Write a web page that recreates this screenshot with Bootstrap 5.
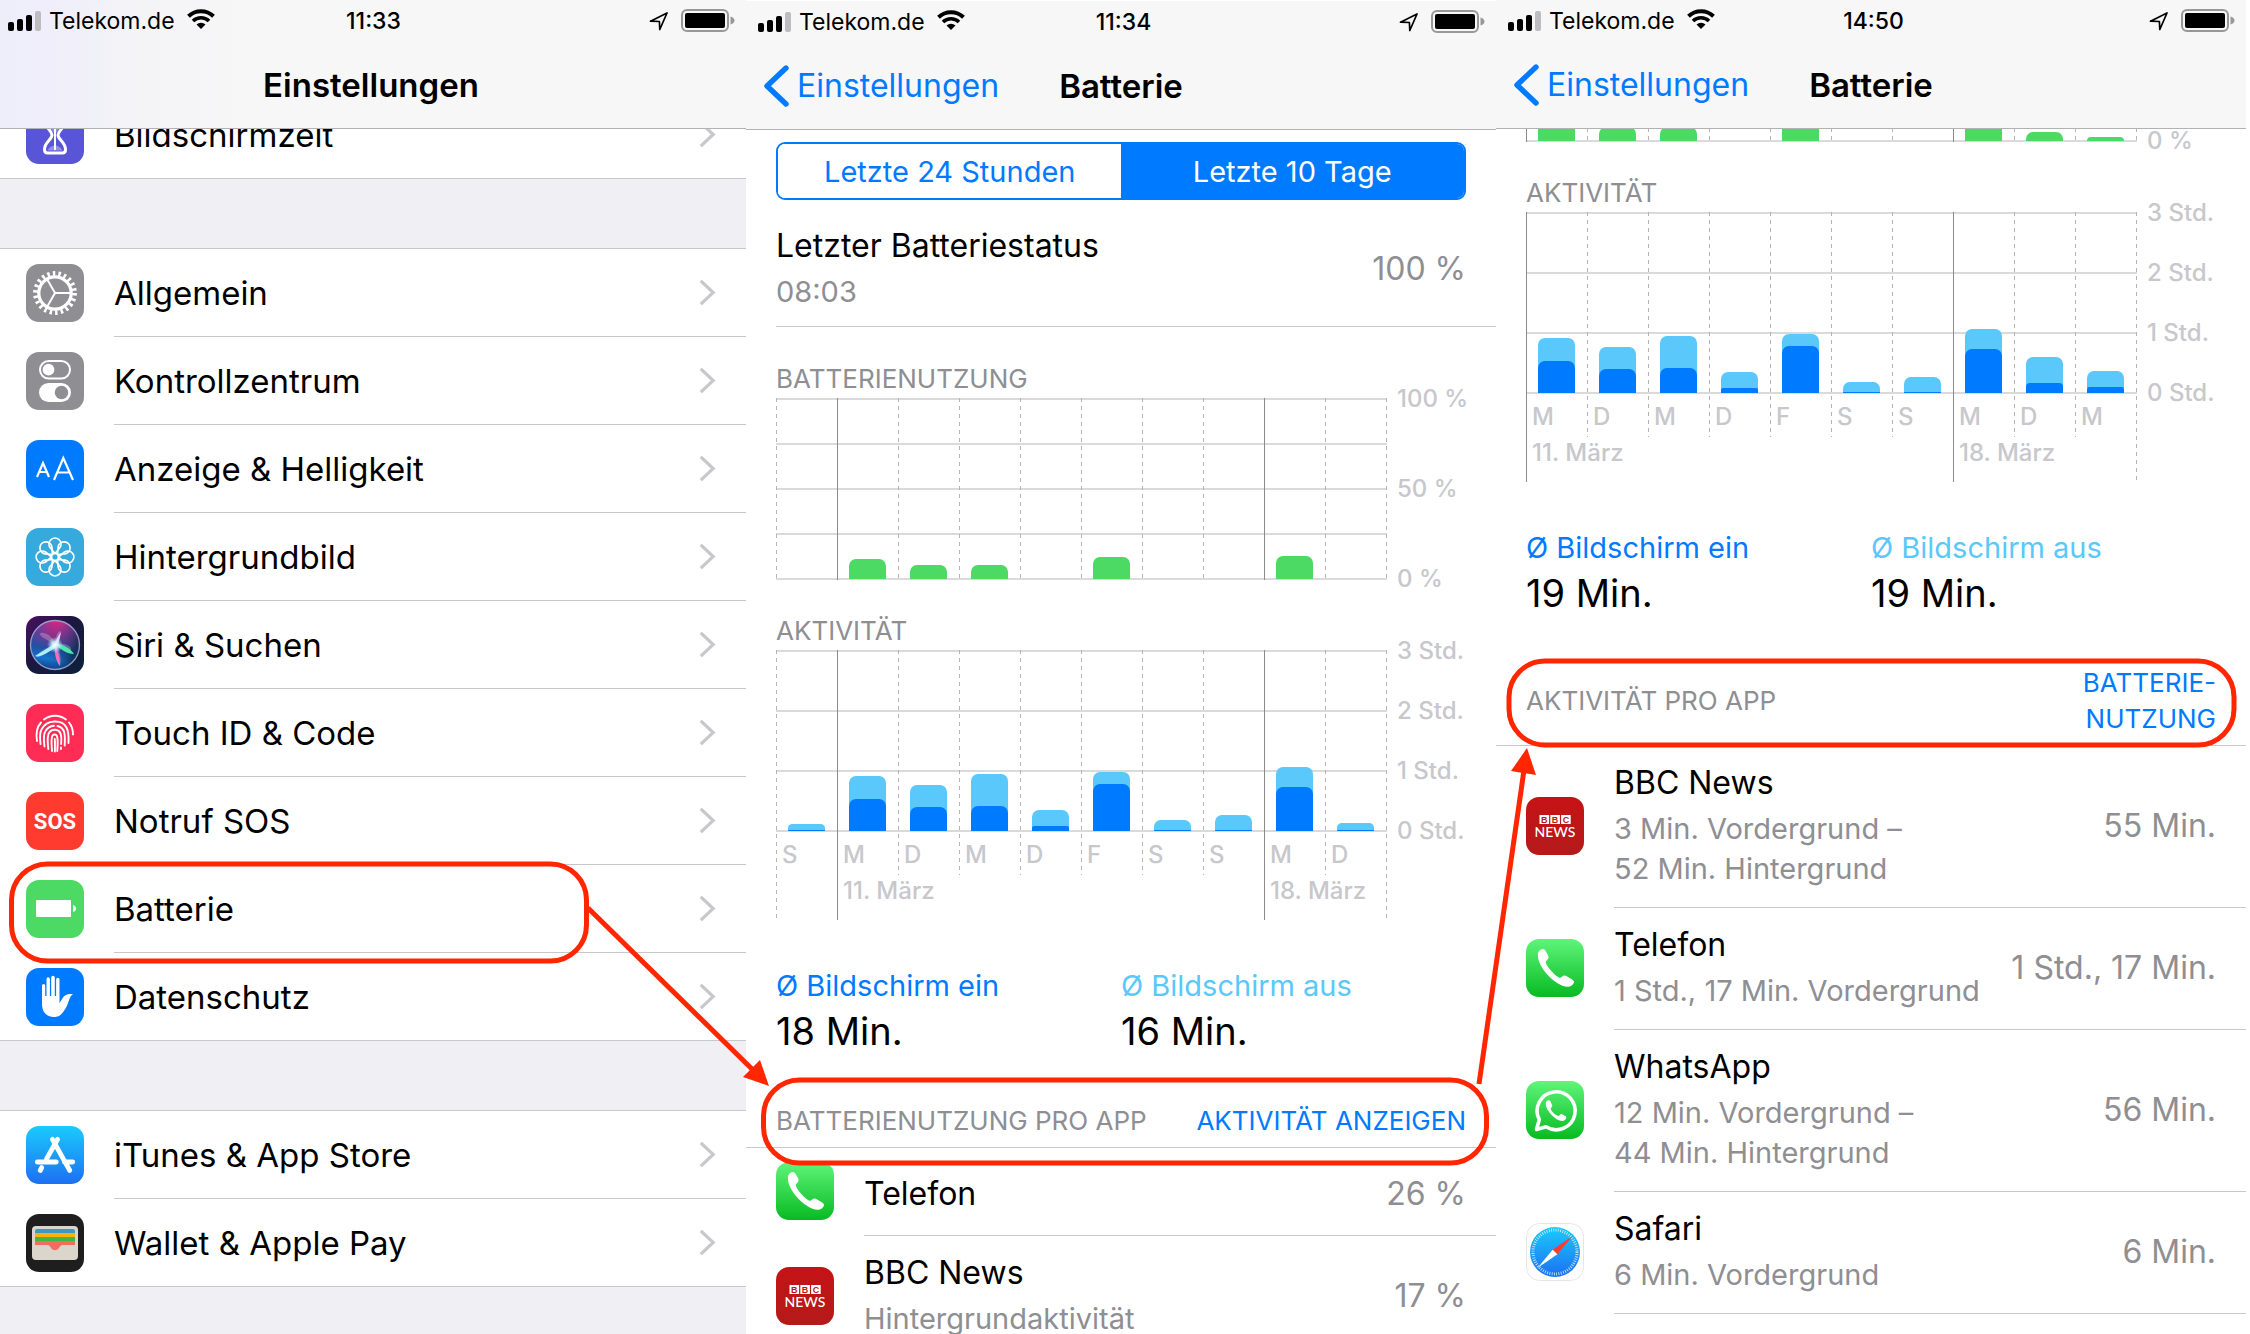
<!DOCTYPE html>
<html lang="de">
<head>
<meta charset="utf-8">
<meta name="viewport" content="width=device-width, initial-scale=1">
<title>Einstellungen – Batterie</title>
<link href="https://cdn.jsdelivr.net/npm/bootstrap@5.3.0/dist/css/bootstrap.min.css" rel="stylesheet">
<style>
:root{--ios-blue:#007aff;--ios-sky:#5ac8fa;--ios-gray:#8e8e93;--ios-pale:#c7c7cc;--ios-line:#c8c7cc;--ios-green:#4cd964}
body{font-family:Inter,"Noto Sans",sans-serif;color:#000;background:#fff}
.screens{display:grid;grid-template-columns:746fr 750fr 750fr 4fr;height:100vh;overflow:hidden}
.phone{min-width:0;overflow:hidden}
.phone-cut>*{margin-left:-4px}
.phone-low{padding-top:1px}
.topbar{background:#f7f7f7;border-bottom:1px solid #b2b2b2;height:129px;flex:none}
.phone-cut .topbar{background:linear-gradient(90deg,#eeedfa 0,#efeefa 60px,#f4f4f7 140px,#f7f7f7 280px)}
.triple{display:grid;grid-template-columns:1fr auto 1fr;align-items:center}
.statusline{height:42px;padding:0 11px 0 12px;font-size:23px;line-height:28px}
.statusline .clock{font-weight:500;padding-left:4px}
.carrier{margin:0 12px 0 7px}
.navline{height:86px;padding:0 17px;font-size:32px;line-height:40px}
.navline h1{font-size:33px;line-height:40px;font-weight:600;margin:0}
.navline a{color:var(--ios-blue);font-size:32px}
.screen-body{overflow:hidden;flex:1 1 0;min-height:0}
.scrolled-menu{margin-top:-38px}
.scrolled-stats{margin-top:-169px}
.menu{border-radius:0}
.menu-row{height:88px;padding:0 0 0 30px;color:#000;text-decoration:none;font-size:33px;line-height:40px}
.menu-row:hover{color:#000}
.menu-text{border-bottom:1px solid var(--ios-line);height:88px;padding-right:30px;margin-left:30px}
.menu>li:last-child .menu-row{border-bottom:1px solid var(--ios-line)}
.menu>li:last-child .menu-text{border-bottom:0}
.menu-gap{background:#efeff4;height:70px;border-bottom:1px solid var(--ios-line)}
.menu-end{background:#efeff4;height:100px}
.appicon{width:58px;height:58px;flex:none;display:block}
.inset{padding:0 30px}
.stats-top{padding-top:1px}
.seg{height:58px;margin-top:12px;border:2px solid var(--ios-blue);border-radius:9px;overflow:hidden}
.seg .btn{border:0;border-radius:0;padding:2px 0 0;font-size:29px;line-height:40px;color:var(--ios-blue);background:#fff}
.seg .btn.active{background:var(--ios-blue);color:#fff}
.t-title{font-size:32px;line-height:40px;margin-bottom:6px}
.t-sub{font-size:29px;line-height:40px;color:var(--ios-gray)}
.t-value{font-size:32px;line-height:40px;color:var(--ios-gray);white-space:nowrap}
.last-level{margin-left:30px;padding:26px 30px 14px 0;border-bottom:1px solid var(--ios-line)}
.t-caps{font-size:26px;line-height:32px;color:var(--ios-gray);margin:35px 0 3px;font-weight:400}
.plot{flex:1 1 0;min-width:0;height:182px;background:linear-gradient(#dadada 2px,transparent 2px) 0 0/100% 60px}
.plot-pct{background-size:100% 45px}
.plot-days{height:270px;background-repeat:no-repeat;background-image:linear-gradient(#dadada 2px,transparent 2px),linear-gradient(#dadada 2px,transparent 2px),linear-gradient(#dadada 2px,transparent 2px),linear-gradient(#dadada 2px,transparent 2px);background-position:0 0,0 60px,0 120px,0 180px;background-size:100% 2px}
.daycol{flex:1 1 0;min-width:0;height:182px;background:repeating-linear-gradient(#b4b4b4 0 4px,transparent 4px 8px) 0 0/1px 100% no-repeat}
.plot-days .daycol{height:225px}
.plot-days .daycol.tall,.plot-days .weekstart{height:270px}
.weekstart{background:linear-gradient(#8c8c8c,#8c8c8c) 0 0/1px 100% no-repeat}
.plot-end{width:1px;background:repeating-linear-gradient(#b4b4b4 0 4px,transparent 4px 8px)}
.bararea{height:181px}
.usagebar{width:60%;border-radius:7px 7px 0 0;overflow:hidden;background:var(--ios-green);height:calc(var(--pct) * 1.8px)}
.timebar{width:60%;border-radius:min(7px,calc(var(--total) * .6px)) min(7px,calc(var(--total) * .6px)) 0 0;overflow:hidden;background:var(--ios-sky);height:calc(var(--total) * 1px)}
.timebar>div{background:var(--ios-blue);border-radius:min(7px,calc(var(--on) * .4px)) min(7px,calc(var(--on) * .4px)) 0 0;height:calc(var(--on) * 1px)}
.t-day{font-size:24px;line-height:30px;font-weight:500;color:var(--ios-pale);padding-left:6px;white-space:nowrap;display:block}
.daycol .t-day:first-of-type{margin-top:9px}
.daycol .t-day+.t-day{margin-top:6px}
.axis{width:79px;padding-left:10px;margin:-14px 0;height:210px;font-size:24px;line-height:30px;font-weight:500;color:var(--ios-pale);white-space:nowrap}
.averages{padding-top:46px;font-size:29px;line-height:40px}
.averages strong{display:block;font-weight:400;font-size:38px;line-height:46px;margin-top:2px;color:#000}
.c-on{color:var(--ios-blue)}
.c-off{color:var(--ios-sky)}
.apphead{padding:49px 30px 8px;border-bottom:1px solid var(--ios-line)}
.apphead h2{font-size:26px;line-height:36px;margin:0;color:var(--ios-gray);font-weight:400}
.apphead .btn{font-size:26px;line-height:36px;padding:0;border:0;color:var(--ios-blue);text-align:right}
.approw{padding-left:30px}
.approw .appicon{margin-bottom:2px}
.approw-body{min-height:88px;padding:17px 30px 18px 0;margin-left:30px;border-bottom:1px solid var(--ios-line)}
.approw-solo .approw-body{padding-top:20px;padding-bottom:16px}
.approw-body .t-title:last-child{margin-bottom:0}
.marks{position:absolute;left:0;top:0;width:100%;height:1334px;pointer-events:none}
</style>
<script src="https://cdn.jsdelivr.net/npm/bootstrap@5.3.0/dist/js/bootstrap.bundle.min.js"></script>
</head>
<body class="position-relative overflow-hidden">

<svg width="0" height="0" class="position-absolute" aria-hidden="true">
<defs>
<linearGradient id="gPhone" x1="0" y1="0" x2="0" y2="1"><stop offset="0" stop-color="#5ff57a"/><stop offset="1" stop-color="#08ba22"/></linearGradient>
<linearGradient id="gStore" x1="0" y1="0" x2="0" y2="1"><stop offset="0" stop-color="#1acbfd"/><stop offset="1" stop-color="#1d6ff2"/></linearGradient>
<linearGradient id="gBbc" x1="0" y1="0" x2="0" y2="1"><stop offset="0" stop-color="#c51315"/><stop offset="1" stop-color="#b41a1a"/></linearGradient>
<linearGradient id="gSiriBg" x1="0" y1="0" x2="1" y2="1"><stop offset="0" stop-color="#4a0f63"/><stop offset=".45" stop-color="#1c1740"/><stop offset="1" stop-color="#0c2138"/></linearGradient>
<linearGradient id="gSiri" x1=".6" y1="0" x2=".4" y2="1"><stop offset="0" stop-color="#e0257c"/><stop offset=".35" stop-color="#8a2f86"/><stop offset=".6" stop-color="#1d4f9c"/><stop offset=".8" stop-color="#1478cc"/><stop offset="1" stop-color="#123a86"/></linearGradient>
<radialGradient id="gGlow"><stop offset="0" stop-color="#fff"/><stop offset=".4" stop-color="#d8f6ff" stop-opacity=".85"/><stop offset="1" stop-color="#9be8ff" stop-opacity="0"/></radialGradient>
<linearGradient id="gTeal" x1="0" y1="0" x2="1" y2=".3"><stop offset="0" stop-color="#1d4f9c" stop-opacity=".7"/><stop offset=".5" stop-color="#2a5dd0" stop-opacity="0"/><stop offset="1" stop-color="#0b2b4d" stop-opacity=".8"/></linearGradient>

<symbol id="i-signal" viewBox="0 0 34 20"><rect x="0" y="11" width="6" height="9" rx="2"/><rect x="9" y="8" width="6" height="12" rx="2"/><rect x="18" y="4" width="6" height="16" rx="2"/><rect x="27" y="0" width="6" height="20" rx="2" fill="#bdbdc0"/></symbol>
<symbol id="i-wifi" viewBox="0 0 28 20"><path d="M1.500 7.200a18 18 0 0 1 25 0" fill="none" stroke="#000" stroke-width="4"/><path d="M6 12a11.500 11.500 0 0 1 16 0" fill="none" stroke="#000" stroke-width="3.600"/><path d="M9.500 15.400a6.600 6.600 0 0 1 9 0L14 20z"/></symbol>
<symbol id="i-loc" viewBox="0 0 20 20"><path d="M1.500 10.200 18 2l-7.200 16.500-.4-8z" fill="none" stroke="#000" stroke-width="1.700" stroke-linejoin="round"/></symbol>
<symbol id="i-batt" viewBox="0 0 54 24"><rect x="1" y="1" width="46" height="21" rx="5" fill="none" stroke="#98989b" stroke-width="2"/><rect x="4" y="4" width="40" height="15" rx="2"/><path d="M49.500 7.500c3 1 4 2.500 4 4s-1 3-4 4z" fill="#98989b"/></symbol>
<symbol id="i-back" viewBox="0 0 26 42"><path d="M23 3 4 21l19 18" fill="none" stroke="#007aff" stroke-width="5.400" stroke-linecap="round" stroke-linejoin="round"/></symbol>
<symbol id="i-chev" viewBox="0 0 17 27"><path d="M1.800 1.800 14.200 13.500 1.800 25.200" fill="none" stroke="#c7c7cc" stroke-width="3.200"/></symbol>

<symbol id="a-time" viewBox="0 0 58 58"><rect width="58" height="58" rx="13" fill="#5856d6"/><path d="M18.500 10.500h21v3c0 8-7.500 11-7.500 15.500s7.500 7.500 7.500 14.500c0 2.500-1 3.500-3 3.500h-15c-2 0-3-1-3-3.500 0-7 7.500-10 7.500-14.500s-7.500-7.500-7.500-15.500z" fill="none" stroke="#fff" stroke-width="3" stroke-linejoin="round"/><path d="M22 18h14l-6 9v12.500c3 1 5 2 6.500 5h-15c1.500-3 3.500-4 6.500-5V27z" fill="#fff" opacity=".35"/><path d="M28 22h2v22h-2z" fill="#fff"/></symbol>
<symbol id="a-gear" viewBox="0 0 58 58"><rect width="58" height="58" rx="13" fill="#8e8e93"/><g fill="none" stroke="#fff"><circle cx="29" cy="29" r="16.200" stroke-width="3.200"/><circle cx="29" cy="29" r="19.600" stroke-width="4.600" stroke-dasharray="2.500 3.098"/><path d="M29 29h16M29 29l-8-14M29 29l-8 14" stroke-width="2"/></g></symbol>
<symbol id="a-ctrl" viewBox="0 0 58 58"><rect width="58" height="58" rx="13" fill="#8e8e93"/><rect x="14" y="9" width="30" height="17.500" rx="8.700" fill="none" stroke="#fff" stroke-width="2"/><circle cx="22.500" cy="17.700" r="5.900" fill="#fff"/><rect x="13" y="31" width="32" height="19" rx="9.500" fill="#fff"/><circle cx="35.500" cy="40.500" r="6.700" fill="#8e8e93"/></symbol>
<symbol id="a-disp" viewBox="0 0 58 58"><rect width="58" height="58" rx="13" fill="#007aff"/><g fill="none" stroke="#fff" stroke-width="2.200"><path d="M11 37 17 23l6 14M13 32h8"/><path d="M28 40 37.300 18 47 40M31.500 32.500h12"/></g></symbol>
<symbol id="a-wall" viewBox="0 0 58 58"><rect width="58" height="58" rx="13" fill="#36aadc"/><g transform="translate(29 29)" fill="none" stroke="#fff" stroke-width="1.700" stroke-linejoin="round"><path d="M0-3.500-5-9.500a6 6 0 1 1 10 0z"/><path d="M0-3.500-5-9.500a6 6 0 1 1 10 0z" transform="rotate(45)"/><path d="M0-3.500-5-9.500a6 6 0 1 1 10 0z" transform="rotate(90)"/><path d="M0-3.500-5-9.500a6 6 0 1 1 10 0z" transform="rotate(135)"/><path d="M0-3.500-5-9.500a6 6 0 1 1 10 0z" transform="rotate(180)"/><path d="M0-3.500-5-9.500a6 6 0 1 1 10 0z" transform="rotate(225)"/><path d="M0-3.500-5-9.500a6 6 0 1 1 10 0z" transform="rotate(270)"/><path d="M0-3.500-5-9.500a6 6 0 1 1 10 0z" transform="rotate(315)"/><circle r="3.500"/></g></symbol>
<symbol id="a-siri" viewBox="0 0 58 58"><rect width="58" height="58" rx="13" fill="url(#gSiriBg)"/><circle cx="29" cy="29" r="24.500" fill="url(#gSiri)"/><circle cx="29" cy="29" r="24.500" fill="url(#gTeal)"/><path d="M29 29C22 24 14 21 14 18s12-1 15 10c0-7 3-13 5-13s0 9-3 13c6-1 14 1 14 5s-8 1-14-3c3 5 5 14 3 20-3-3-5-12-5-18-6 4-14 9-19 9 2-5 11-10 19-12z" fill="#f4c9ee" opacity=".3"/><path d="M30 27 9 40c5 2 14-4 21-9z" fill="#a5f1ff"/><path d="M29 29c3 5 5 14 5 21-4-4-6-14-5-21z" fill="#ff69c4"/><path d="M30 27c8 2 15 6 18 11-7 0-14-5-18-9z" fill="#4de8a8"/><path d="M28 29c2-5 4-9 7-13-1 5-2 9-3 13z" fill="#e9d6ff"/><circle cx="29" cy="29" r="8" fill="url(#gGlow)"/><circle cx="29" cy="29" r="24.500" fill="none" stroke="#aab6e0" stroke-width="1.300" opacity=".8"/></symbol>
<symbol id="a-touch" viewBox="0 0 58 58"><rect width="58" height="58" rx="13" fill="#ff2d55"/><g fill="none" stroke="#fff" stroke-width="1.900" stroke-linecap="round"><path d="M18 15.500a18 18 0 0 1 22 0"/><path d="M11 37c-1-6-1-13 4-18.500"/><path d="M43 18.500c3 3.500 4 7.500 4 12"/><path d="M14.500 40c-.6-5-1-11 1-14.500C21 15 36 15.500 40.500 23.500c2.500 5 2.300 10 2 15.500"/><path d="M18.500 42.500c-.8-6-1.300-12 1-15.500 2-3.500 5.500-5 8.500-5.300"/><path d="M31.500 22c8 2 7.700 9 7.200 19.500"/><path d="M22.300 45c-.7-7-1.600-13 .9-16.500 3-4 9.500-3.500 11.300.8 1.500 4 .8 8 .6 10.700M35 43.500v1.500"/><path d="M26 47c-.3-6-1.300-13 .6-15.600 1.400-1.400 3.600-1.200 4.300.6 1.500 4 .6 9 .4 15"/><path d="M28.800 35c.3 4 .2 8 .1 12.500"/></g></symbol>
<symbol id="a-sos" viewBox="0 0 58 58"><rect width="58" height="58" rx="13" fill="#ff3b30"/><text x="29" y="37" text-anchor="middle" font-family="Roboto,sans-serif" font-weight="700" font-size="22" fill="#fff">SOS</text></symbol>
<symbol id="a-batt" viewBox="0 0 58 58"><rect width="58" height="58" rx="13" fill="#4cd964"/><rect x="10" y="20" width="35" height="17" rx="1" fill="#fff"/><path d="M47 25c2 .5 3 2 3 3.500S49 31.500 47 32z" fill="#fff"/></symbol>
<symbol id="a-hand" viewBox="0 0 58 58"><rect width="58" height="58" rx="13" fill="#007aff"/><path d="M16 36V17.500a1.600 1.600 0 0 1 3.200 0V28h1.300V11a1.700 1.700 0 0 1 3.400 0v17h1.300V9.500a1.800 1.800 0 0 1 3.600 0V28h1.300V11.500a1.700 1.700 0 0 1 3.400 0V35l3.500-5.500c2-3 5.500-4.200 10-3.300-2 1-3 3-4 6-1.600 5-3.500 9-6 12-3 4-6 4.800-9 4.800-7.500 0-12-5-12-13z" fill="#fff"/></symbol>
<symbol id="a-store" viewBox="0 0 58 58"><rect width="58" height="58" rx="13" fill="url(#gStore)"/><g stroke="#fff" stroke-width="4.800" stroke-linecap="round" fill="none"><path d="M31.600 13.300 20.500 33"/><path d="M26.400 13.300 43.800 44.500"/><path d="M15.800 41.500l-1.600 3"/><path d="M11.300 36h19M38.500 36h8.200"/></g></symbol>
<symbol id="a-wallet" viewBox="0 0 58 58"><rect width="58" height="58" rx="13" fill="#1e1e1f"/><rect x="6" y="12" width="46" height="34" rx="4" fill="#dad6cb"/><path d="M9 19v-2a2 2 0 0 1 2-2h36a2 2 0 0 1 2 2v2z" fill="#3b99c9"/><path d="M9 19h40v4H9z" fill="#ffb003"/><path d="M9 23h40v4H9z" fill="#40b740"/><path d="M9 27h40v4H37c-2 0-3 1-4 3-2 3-6 3-8 0-1-2-2-3-4-3H9z" fill="#f26d5f"/></symbol>
<symbol id="a-phone" viewBox="0 0 58 58"><rect width="58" height="58" rx="13" fill="url(#gPhone)"/><path d="M12 14c1-2.500 3-4 5-4 1.500 0 2.500 1.500 3.500 3.500 1.200 2.300 2.500 4 2 5.500-.5 1.800-3 2.500-2.700 4.500C20.500 27.500 29 36.500 33 38.500c2.200 1 3-1.700 5-2 1.700-.3 4 1.500 6.500 3 2 1.200 3.500 2 3.500 3.500 0 2-3 5-6.500 4.800C29 47.200 10 27 12 14z" fill="#fff"/></symbol>
<symbol id="a-bbc" viewBox="0 0 58 58"><rect width="58" height="58" rx="13" fill="url(#gBbc)"/><path d="M13.500 18h9.600v9h-9.600zM24.300 18h9.600v9h-9.600zM35.100 18h9.600v9h-9.600z" fill="#fff"/><g text-anchor="middle" font-family="'Liberation Sans',sans-serif" font-weight="700" font-size="9" fill="#c01616"><text x="18.300" y="25.800">B</text><text x="29.100" y="25.800">B</text><text x="39.900" y="25.800">C</text></g><text x="29" y="40" text-anchor="middle" font-family="Lato,sans-serif" font-weight="500" font-size="14" fill="#fff">NEWS</text></symbol>
<symbol id="a-wa" viewBox="0 0 58 58"><rect width="58" height="58" rx="13" fill="url(#gPhone)"/><path d="M10.500 48.500l2.800-10A19 19 0 1 1 20 45.800z" fill="none" stroke="#fff" stroke-width="3.600" stroke-linejoin="round"/><path d="M20 21c1-1.800 3.700-2.200 4.300-1l2 4.500c.4 1-1.800 2.500-1.600 3.500.8 2.700 5 6.300 7.600 7 1 .2 2.200-2.400 3.300-2l4.300 2.200c1 .6.200 3.300-1.700 4.300C33 42.500 18 30 20 21z" fill="#fff"/></symbol>
<symbol id="a-safari" viewBox="0 0 58 58"><rect x=".5" y=".5" width="57" height="57" rx="13" fill="#fefefe" stroke="#e6e6e6"/><circle cx="29" cy="29" r="25" fill="url(#gStore)"/><circle cx="29" cy="29" r="22" fill="none" stroke="#d4ecfb" stroke-width="3" stroke-dasharray=".8 1.504"/><path d="M46.500 13 26.600 26.800l4.800 4.500z" fill="#ff3b30"/><path d="M11.500 45 26.600 26.800l4.800 4.500z" fill="#fff"/></symbol>
</defs>
</svg>

<main class="screens">

<section class="phone phone-cut d-flex flex-column" aria-label="Einstellungen">
  <header class="topbar">
    <div class="statusline triple">
      <div class="d-flex align-items-center"><svg width="34" height="20"><use href="#i-signal"/></svg><span class="carrier">Telekom.de</span><svg class="mb-1" width="28" height="20"><use href="#i-wifi"/></svg></div>
      <div class="clock">11:33</div>
      <div class="d-flex align-items-center justify-content-end"><svg class="me-2" width="20" height="20"><use href="#i-loc"/></svg><svg class="ms-1" width="54" height="24"><use href="#i-batt"/></svg></div>
    </div>
    <div class="navline triple"><span></span><h1>Einstellungen</h1><span></span></div>
  </header>
  <div class="screen-body">
    <ul class="menu list-unstyled mb-0 scrolled-menu">
      <li><a href="#" class="menu-row d-flex align-items-center"><svg class="appicon"><use href="#a-time"/></svg><span class="menu-text flex-grow-1 d-flex align-items-center justify-content-between">Bildschirmzeit<svg width="17" height="27"><use href="#i-chev"/></svg></span></a></li>
    </ul>
    <div class="menu-gap"></div>
    <ul class="menu list-unstyled m-0">
      <li><a href="#" class="menu-row d-flex align-items-center"><svg class="appicon"><use href="#a-gear"/></svg><span class="menu-text flex-grow-1 d-flex align-items-center justify-content-between">Allgemein<svg width="17" height="27"><use href="#i-chev"/></svg></span></a></li>
      <li><a href="#" class="menu-row d-flex align-items-center"><svg class="appicon"><use href="#a-ctrl"/></svg><span class="menu-text flex-grow-1 d-flex align-items-center justify-content-between">Kontrollzentrum<svg width="17" height="27"><use href="#i-chev"/></svg></span></a></li>
      <li><a href="#" class="menu-row d-flex align-items-center"><svg class="appicon"><use href="#a-disp"/></svg><span class="menu-text flex-grow-1 d-flex align-items-center justify-content-between">Anzeige &amp; Helligkeit<svg width="17" height="27"><use href="#i-chev"/></svg></span></a></li>
      <li><a href="#" class="menu-row d-flex align-items-center"><svg class="appicon"><use href="#a-wall"/></svg><span class="menu-text flex-grow-1 d-flex align-items-center justify-content-between">Hintergrundbild<svg width="17" height="27"><use href="#i-chev"/></svg></span></a></li>
      <li><a href="#" class="menu-row d-flex align-items-center"><svg class="appicon"><use href="#a-siri"/></svg><span class="menu-text flex-grow-1 d-flex align-items-center justify-content-between">Siri &amp; Suchen<svg width="17" height="27"><use href="#i-chev"/></svg></span></a></li>
      <li><a href="#" class="menu-row d-flex align-items-center"><svg class="appicon"><use href="#a-touch"/></svg><span class="menu-text flex-grow-1 d-flex align-items-center justify-content-between">Touch ID &amp; Code<svg width="17" height="27"><use href="#i-chev"/></svg></span></a></li>
      <li><a href="#" class="menu-row d-flex align-items-center"><svg class="appicon"><use href="#a-sos"/></svg><span class="menu-text flex-grow-1 d-flex align-items-center justify-content-between">Notruf SOS<svg width="17" height="27"><use href="#i-chev"/></svg></span></a></li>
      <li><a href="#" class="menu-row d-flex align-items-center"><svg class="appicon"><use href="#a-batt"/></svg><span class="menu-text flex-grow-1 d-flex align-items-center justify-content-between">Batterie<svg width="17" height="27"><use href="#i-chev"/></svg></span></a></li>
      <li><a href="#" class="menu-row d-flex align-items-center"><svg class="appicon"><use href="#a-hand"/></svg><span class="menu-text flex-grow-1 d-flex align-items-center justify-content-between">Datenschutz<svg width="17" height="27"><use href="#i-chev"/></svg></span></a></li>
    </ul>
    <div class="menu-gap"></div>
    <ul class="menu list-unstyled m-0">
      <li><a href="#" class="menu-row d-flex align-items-center"><svg class="appicon"><use href="#a-store"/></svg><span class="menu-text flex-grow-1 d-flex align-items-center justify-content-between">iTunes &amp; App Store<svg width="17" height="27"><use href="#i-chev"/></svg></span></a></li>
      <li><a href="#" class="menu-row d-flex align-items-center"><svg class="appicon"><use href="#a-wallet"/></svg><span class="menu-text flex-grow-1 d-flex align-items-center justify-content-between">Wallet &amp; Apple Pay<svg width="17" height="27"><use href="#i-chev"/></svg></span></a></li>
    </ul>
    <div class="menu-end"></div>
  </div>
</section>

<section class="phone phone-low d-flex flex-column" aria-label="Batterienutzung">
  <header class="topbar">
    <div class="statusline triple">
      <div class="d-flex align-items-center"><svg width="34" height="20"><use href="#i-signal"/></svg><span class="carrier">Telekom.de</span><svg class="mb-1" width="28" height="20"><use href="#i-wifi"/></svg></div>
      <div class="clock">11:34</div>
      <div class="d-flex align-items-center justify-content-end"><svg class="me-2" width="20" height="20"><use href="#i-loc"/></svg><svg class="ms-1" width="54" height="24"><use href="#i-batt"/></svg></div>
    </div>
    <div class="navline triple"><a href="#" class="d-flex align-items-center text-decoration-none"><svg class="me-2" width="26" height="42"><use href="#i-back"/></svg>Einstellungen</a><h1>Batterie</h1><span></span></div>
  </header>
  <div class="screen-body">
    <div class="inset">
      <div class="seg btn-group d-flex" role="group" aria-label="Zeitraum"><button type="button" class="btn w-50">Letzte 24 Stunden</button><button type="button" class="btn w-50 active" aria-pressed="true">Letzte 10 Tage</button></div>
    </div>
    <div class="last-level d-flex justify-content-between align-items-center"><div><div class="t-title">Letzter Batteriestatus</div><div class="t-sub">08:03</div></div><div class="t-value">100 %</div></div>
    <div class="inset stats-top">
      <h2 class="t-caps">BATTERIENUTZUNG</h2>
      <div class="d-flex">
        <div class="plot plot-pct d-flex">
          <div class="daycol"></div>
          <div class="daycol weekstart"><div class="bararea d-flex align-items-end justify-content-center"><div class="usagebar" style="--pct:11"></div></div></div>
          <div class="daycol"><div class="bararea d-flex align-items-end justify-content-center"><div class="usagebar" style="--pct:8"></div></div></div>
          <div class="daycol"><div class="bararea d-flex align-items-end justify-content-center"><div class="usagebar" style="--pct:8"></div></div></div>
          <div class="daycol"></div>
          <div class="daycol"><div class="bararea d-flex align-items-end justify-content-center"><div class="usagebar" style="--pct:12"></div></div></div>
          <div class="daycol"></div>
          <div class="daycol"></div>
          <div class="daycol weekstart"><div class="bararea d-flex align-items-end justify-content-center"><div class="usagebar" style="--pct:13"></div></div></div>
          <div class="daycol"></div>
          <div class="plot-end"></div>
        </div>
        <div class="axis d-flex flex-column justify-content-between"><span>100 %</span><span>50 %</span><span>0 %</span></div>
      </div>
      <h2 class="t-caps">AKTIVITÄT</h2>
      <div class="d-flex align-items-start">
        <div class="plot plot-days d-flex align-items-start">
          <div class="daycol tall"><div class="bararea d-flex align-items-end justify-content-center"><div class="timebar d-flex flex-column justify-content-end" style="--total:7;--on:1"><div></div></div></div><span class="t-day">S</span></div>
          <div class="daycol weekstart"><div class="bararea d-flex align-items-end justify-content-center"><div class="timebar d-flex flex-column justify-content-end" style="--total:55;--on:32"><div></div></div></div><span class="t-day">M</span><span class="t-day">11. März</span></div>
          <div class="daycol"><div class="bararea d-flex align-items-end justify-content-center"><div class="timebar d-flex flex-column justify-content-end" style="--total:46;--on:24"><div></div></div></div><span class="t-day">D</span></div>
          <div class="daycol"><div class="bararea d-flex align-items-end justify-content-center"><div class="timebar d-flex flex-column justify-content-end" style="--total:57;--on:25"><div></div></div></div><span class="t-day">M</span></div>
          <div class="daycol"><div class="bararea d-flex align-items-end justify-content-center"><div class="timebar d-flex flex-column justify-content-end" style="--total:21;--on:5"><div></div></div></div><span class="t-day">D</span></div>
          <div class="daycol"><div class="bararea d-flex align-items-end justify-content-center"><div class="timebar d-flex flex-column justify-content-end" style="--total:59;--on:47"><div></div></div></div><span class="t-day">F</span></div>
          <div class="daycol"><div class="bararea d-flex align-items-end justify-content-center"><div class="timebar d-flex flex-column justify-content-end" style="--total:11;--on:1"><div></div></div></div><span class="t-day">S</span></div>
          <div class="daycol"><div class="bararea d-flex align-items-end justify-content-center"><div class="timebar d-flex flex-column justify-content-end" style="--total:16;--on:1"><div></div></div></div><span class="t-day">S</span></div>
          <div class="daycol weekstart"><div class="bararea d-flex align-items-end justify-content-center"><div class="timebar d-flex flex-column justify-content-end" style="--total:64;--on:44"><div></div></div></div><span class="t-day">M</span><span class="t-day">18. März</span></div>
          <div class="daycol"><div class="bararea d-flex align-items-end justify-content-center"><div class="timebar d-flex flex-column justify-content-end" style="--total:8;--on:1"><div></div></div></div><span class="t-day">D</span></div>
          <div class="plot-end h-100"></div>
        </div>
        <div class="axis d-flex flex-column justify-content-between"><span>3 Std.</span><span>2 Std.</span><span>1 Std.</span><span>0 Std.</span></div>
      </div>
      <div class="averages row g-0">
        <div class="col-6 c-on">Ø Bildschirm ein<strong>18 Min.</strong></div>
        <div class="col-6 c-off">Ø Bildschirm aus<strong>16 Min.</strong></div>
      </div>
    </div>
    <div class="apphead d-flex justify-content-between align-items-center"><h2>BATTERIENUTZUNG PRO APP</h2><button type="button" class="btn">AKTIVITÄT ANZEIGEN</button></div>
    <div class="approw approw-solo d-flex align-items-center"><svg class="appicon"><use href="#a-phone"/></svg><div class="approw-body flex-grow-1 d-flex align-items-center justify-content-between"><div><div class="t-title">Telefon</div></div><div class="t-value">26 %</div></div></div>
    <div class="approw d-flex align-items-center"><svg class="appicon"><use href="#a-bbc"/></svg><div class="approw-body flex-grow-1 d-flex align-items-center justify-content-between"><div><div class="t-title">BBC News</div><div class="t-sub">Hintergrundaktivität</div></div><div class="t-value">17 %</div></div></div>
  </div>
</section>

<section class="phone d-flex flex-column" aria-label="Aktivität pro App">
  <header class="topbar">
    <div class="statusline triple">
      <div class="d-flex align-items-center"><svg width="34" height="20"><use href="#i-signal"/></svg><span class="carrier">Telekom.de</span><svg class="mb-1" width="28" height="20"><use href="#i-wifi"/></svg></div>
      <div class="clock">14:50</div>
      <div class="d-flex align-items-center justify-content-end"><svg class="me-2" width="20" height="20"><use href="#i-loc"/></svg><svg class="ms-1" width="54" height="24"><use href="#i-batt"/></svg></div>
    </div>
    <div class="navline triple"><a href="#" class="d-flex align-items-center text-decoration-none"><svg class="me-2" width="26" height="42"><use href="#i-back"/></svg>Einstellungen</a><h1>Batterie</h1><span></span></div>
  </header>
  <div class="screen-body">
    <div class="inset scrolled-stats">
      <div class="d-flex">
        <div class="plot plot-pct d-flex">
          <div class="daycol weekstart"><div class="bararea d-flex align-items-end justify-content-center"><div class="usagebar" style="--pct:11"></div></div></div>
          <div class="daycol"><div class="bararea d-flex align-items-end justify-content-center"><div class="usagebar" style="--pct:8"></div></div></div>
          <div class="daycol"><div class="bararea d-flex align-items-end justify-content-center"><div class="usagebar" style="--pct:8"></div></div></div>
          <div class="daycol"></div>
          <div class="daycol"><div class="bararea d-flex align-items-end justify-content-center"><div class="usagebar" style="--pct:12"></div></div></div>
          <div class="daycol"></div>
          <div class="daycol"></div>
          <div class="daycol weekstart"><div class="bararea d-flex align-items-end justify-content-center"><div class="usagebar" style="--pct:13"></div></div></div>
          <div class="daycol"><div class="bararea d-flex align-items-end justify-content-center"><div class="usagebar" style="--pct:5"></div></div></div>
          <div class="daycol"><div class="bararea d-flex align-items-end justify-content-center"><div class="usagebar" style="--pct:2"></div></div></div>
          <div class="plot-end"></div>
        </div>
        <div class="axis d-flex flex-column justify-content-end"><span>0 %</span></div>
      </div>
      <h2 class="t-caps">AKTIVITÄT</h2>
      <div class="d-flex align-items-start">
        <div class="plot plot-days d-flex align-items-start">
          <div class="daycol weekstart"><div class="bararea d-flex align-items-end justify-content-center"><div class="timebar d-flex flex-column justify-content-end" style="--total:55;--on:32"><div></div></div></div><span class="t-day">M</span><span class="t-day">11. März</span></div>
          <div class="daycol"><div class="bararea d-flex align-items-end justify-content-center"><div class="timebar d-flex flex-column justify-content-end" style="--total:46;--on:24"><div></div></div></div><span class="t-day">D</span></div>
          <div class="daycol"><div class="bararea d-flex align-items-end justify-content-center"><div class="timebar d-flex flex-column justify-content-end" style="--total:57;--on:25"><div></div></div></div><span class="t-day">M</span></div>
          <div class="daycol"><div class="bararea d-flex align-items-end justify-content-center"><div class="timebar d-flex flex-column justify-content-end" style="--total:21;--on:5"><div></div></div></div><span class="t-day">D</span></div>
          <div class="daycol"><div class="bararea d-flex align-items-end justify-content-center"><div class="timebar d-flex flex-column justify-content-end" style="--total:59;--on:47"><div></div></div></div><span class="t-day">F</span></div>
          <div class="daycol"><div class="bararea d-flex align-items-end justify-content-center"><div class="timebar d-flex flex-column justify-content-end" style="--total:11;--on:1"><div></div></div></div><span class="t-day">S</span></div>
          <div class="daycol"><div class="bararea d-flex align-items-end justify-content-center"><div class="timebar d-flex flex-column justify-content-end" style="--total:16;--on:1"><div></div></div></div><span class="t-day">S</span></div>
          <div class="daycol weekstart"><div class="bararea d-flex align-items-end justify-content-center"><div class="timebar d-flex flex-column justify-content-end" style="--total:64;--on:44"><div></div></div></div><span class="t-day">M</span><span class="t-day">18. März</span></div>
          <div class="daycol"><div class="bararea d-flex align-items-end justify-content-center"><div class="timebar d-flex flex-column justify-content-end" style="--total:36;--on:10"><div></div></div></div><span class="t-day">D</span></div>
          <div class="daycol"><div class="bararea d-flex align-items-end justify-content-center"><div class="timebar d-flex flex-column justify-content-end" style="--total:22;--on:6"><div></div></div></div><span class="t-day">M</span></div>
          <div class="plot-end h-100"></div>
        </div>
        <div class="axis d-flex flex-column justify-content-between"><span>3 Std.</span><span>2 Std.</span><span>1 Std.</span><span>0 Std.</span></div>
      </div>
      <div class="averages row g-0">
        <div class="col-6 c-on">Ø Bildschirm ein<strong>19 Min.</strong></div>
        <div class="col-6 c-off">Ø Bildschirm aus<strong>19 Min.</strong></div>
      </div>
    </div>
    <div class="apphead d-flex justify-content-between align-items-center"><h2>AKTIVITÄT PRO APP</h2><button type="button" class="btn">BATTERIE-<br>NUTZUNG</button></div>
    <div class="approw d-flex align-items-center"><svg class="appicon"><use href="#a-bbc"/></svg><div class="approw-body flex-grow-1 d-flex align-items-center justify-content-between"><div><div class="t-title">BBC News</div><div class="t-sub">3 Min. Vordergrund –<br>52 Min. Hintergrund</div></div><div class="t-value">55 Min.</div></div></div>
    <div class="approw d-flex align-items-center"><svg class="appicon"><use href="#a-phone"/></svg><div class="approw-body flex-grow-1 d-flex align-items-center justify-content-between"><div><div class="t-title">Telefon</div><div class="t-sub text-nowrap">1 Std., 17 Min. Vordergrund</div></div><div class="t-value">1 Std., 17 Min.</div></div></div>
    <div class="approw d-flex align-items-center"><svg class="appicon"><use href="#a-wa"/></svg><div class="approw-body flex-grow-1 d-flex align-items-center justify-content-between"><div><div class="t-title">WhatsApp</div><div class="t-sub">12 Min. Vordergrund –<br>44 Min. Hintergrund</div></div><div class="t-value">56 Min.</div></div></div>
    <div class="approw d-flex align-items-center"><svg class="appicon"><use href="#a-safari"/></svg><div class="approw-body flex-grow-1 d-flex align-items-center justify-content-between"><div><div class="t-title">Safari</div><div class="t-sub">6 Min. Vordergrund</div></div><div class="t-value">6 Min.</div></div></div>
  </div>
</section>
</main>

<svg class="marks" viewBox="0 0 2250 1334" preserveAspectRatio="none" aria-hidden="true">
  <g fill="none" stroke="#ff2600" stroke-width="5">
    <rect x="11.500" y="864" width="575" height="97" rx="36"/>
    <rect x="763.500" y="1080" width="723" height="83" rx="36"/>
    <rect x="1509" y="661" width="725" height="84" rx="36"/>
    <path d="M588 908 753 1070M1479 1084 1524 770"/>
  </g>
  <path d="M769 1086 743 1077 760 1060zM1527 748 1511 771 1536 775z" fill="#ff2600"/>
</svg>
</body>
</html>
